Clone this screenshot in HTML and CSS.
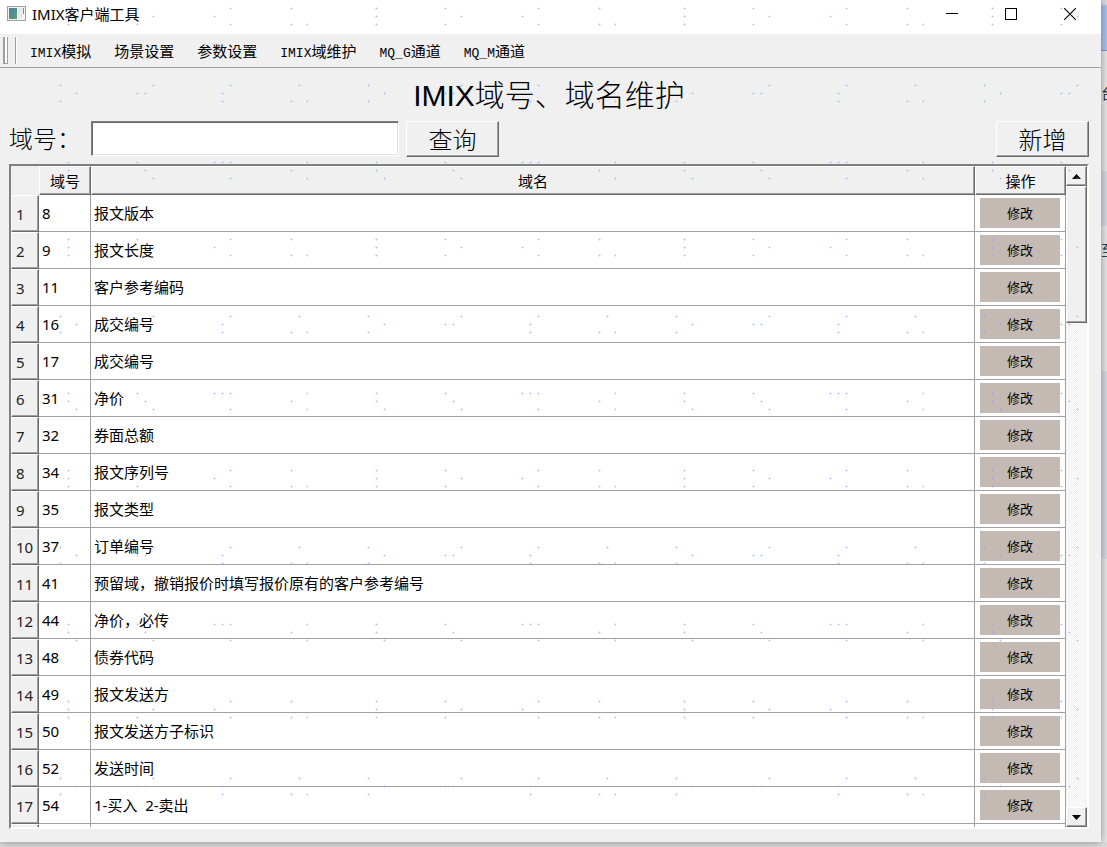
FILE: index.html
```html
<!DOCTYPE html>
<html lang="zh-CN">
<head>
<meta charset="utf-8">
<title>IMIX客户端工具</title>
<link rel="stylesheet" href="styles.css">
</head>
<body>
<div class="desktop">
  <main class="window">
    <header class="titlebar">
      <svg class="app-icon" width="19" height="16" viewBox="0 0 19 16" aria-hidden="true">
        <defs><linearGradient id="ig" x1="0" y1="0" x2="1" y2="1"><stop offset="0" stop-color="#4b7f9e"/><stop offset="1" stop-color="#58a07c"/></linearGradient></defs>
        <rect x=".5" y=".5" width="18" height="14" fill="#f4f4f4" stroke="#9a9fa5"/>
        <rect x="2" y="2" width="8" height="11" fill="url(#ig)"/>
        <rect x="11" y="2" width="4" height="11" fill="#e6e8ea"/>
        <rect x="16" y="2" width="1" height="6" fill="#5a93a6"/>
      </svg>
      <span class="app-name">IMIX客户端工具</span>
      <button class="win-btn" aria-label="最小化"><svg width="12" height="12" viewBox="0 0 12 12"><path d="M0 5.500H12" stroke="#000"/></svg></button>
      <button class="win-btn" aria-label="最大化"><svg width="12" height="12" viewBox="0 0 12 12"><rect x=".5" y=".5" width="11" height="11" fill="none" stroke="#000"/></svg></button>
      <button class="win-btn" aria-label="关闭"><svg width="12" height="12" viewBox="0 0 12 12"><path d="M0 0L12 12M12 0L0 12" stroke="#000" stroke-width="1.100"/></svg></button>
    </header>
    <nav class="toolbar">
      <i class="grip"></i><i class="groove"></i>
      <button><span>IMIX</span>模拟</button>
      <button>场景设置</button>
      <button>参数设置</button>
      <button><span>IMIX</span>域维护</button>
      <button><span>MQ_G</span>通道</button>
      <button><span>MQ_M</span>通道</button>
    </nav>
    <section class="content">
      <h1>IMIX域号、域名维护</h1>
      <form class="search" onsubmit="return false">
        <label for="field-no">域号：</label>
        <input id="field-no" type="text">
        <button class="raised">查询</button>
        <button class="raised add" type="button">新增</button>
      </form>
      <div class="frame">
        <div class="viewport">
          <table>
            <colgroup><col class="c-no"><col class="c-id"><col><col class="c-op"></colgroup>
            <thead><tr><td></td><th>域号</th><th>域名</th><th>操作</th></tr></thead>
            <tbody>
              <tr><th>1</th><td>8</td><td>报文版本</td><td><button>修改</button></td></tr>
              <tr><th>2</th><td>9</td><td>报文长度</td><td><button>修改</button></td></tr>
              <tr><th>3</th><td>11</td><td>客户参考编码</td><td><button>修改</button></td></tr>
              <tr><th>4</th><td>16</td><td>成交编号</td><td><button>修改</button></td></tr>
              <tr><th>5</th><td>17</td><td>成交编号</td><td><button>修改</button></td></tr>
              <tr><th>6</th><td>31</td><td>净价</td><td><button>修改</button></td></tr>
              <tr><th>7</th><td>32</td><td>券面总额</td><td><button>修改</button></td></tr>
              <tr><th>8</th><td>34</td><td>报文序列号</td><td><button>修改</button></td></tr>
              <tr><th>9</th><td>35</td><td>报文类型</td><td><button>修改</button></td></tr>
              <tr><th>10</th><td>37</td><td>订单编号</td><td><button>修改</button></td></tr>
              <tr><th>11</th><td>41</td><td>预留域，撤销报价时填写报价原有的客户参考编号</td><td><button>修改</button></td></tr>
              <tr><th>12</th><td>44</td><td>净价，必传</td><td><button>修改</button></td></tr>
              <tr><th>13</th><td>48</td><td>债券代码</td><td><button>修改</button></td></tr>
              <tr><th>14</th><td>49</td><td>报文发送方</td><td><button>修改</button></td></tr>
              <tr><th>15</th><td>50</td><td>报文发送方子标识</td><td><button>修改</button></td></tr>
              <tr><th>16</th><td>52</td><td>发送时间</td><td><button>修改</button></td></tr>
              <tr><th>17</th><td>54</td><td>1-买入&nbsp; 2-卖出</td><td><button>修改</button></td></tr>
              <tr><th></th><td></td><td></td><td><button aria-label="修改"></button></td></tr>
            </tbody>
          </table>
        </div>
        <div class="scrollbar">
          <button class="raised" aria-label="向上滚动"><svg width="9" height="5" viewBox="0 0 9 5"><path d="M4.500 0L9 5H0Z"/></svg></button>
          <div class="thumb raised"></div>
          <div class="track"></div>
          <button class="raised" aria-label="向下滚动"><svg width="9" height="5" viewBox="0 0 9 5"><path d="M0 0H9L4.500 5Z"/></svg></button>
        </div>
      </div>
    </section>
    <svg class="dots" aria-hidden="true">
      <defs>
        <g id="d"><path d="M-1 0H2V1H-1ZM0 -1H1V2H0Z" fill="#8aa4ff" opacity=".3"/><path d="M0 0H1V1H0Z" fill="#7f98f5" opacity=".4"/></g>
        <pattern id="dotcode" width="308" height="231" patternUnits="userSpaceOnUse">
          <use href="#d" x="68" y="8"/><use href="#d" x="68" y="16"/><use href="#d" x="68" y="24"/>
          <use href="#d" x="137" y="8"/><use href="#d" x="137" y="24"/><use href="#d" x="153" y="16"/>
          <use href="#d" x="214" y="16"/><use href="#d" x="230" y="8"/><use href="#d" x="230" y="24"/>
          <use href="#d" x="291" y="8"/><use href="#d" x="291" y="24"/><use href="#d" x="307" y="24"/>
          <use href="#d" x="60" y="85"/><use href="#d" x="60" y="101"/><use href="#d" x="76" y="93"/>
          <use href="#d" x="137" y="93"/><use href="#d" x="145" y="93"/><use href="#d" x="153" y="85"/>
          <use href="#d" x="222" y="93"/><use href="#d" x="222" y="101"/><use href="#d" x="230" y="85"/>
          <use href="#d" x="291" y="101"/><use href="#d" x="299" y="85"/><use href="#d" x="307" y="101"/>
          <use href="#d" x="68" y="162"/><use href="#d" x="68" y="170"/><use href="#d" x="76" y="178"/>
          <use href="#d" x="137" y="162"/><use href="#d" x="145" y="170"/><use href="#d" x="153" y="178"/>
          <use href="#d" x="214" y="162"/><use href="#d" x="222" y="162"/><use href="#d" x="230" y="162"/><use href="#d" x="230" y="178"/>
          <use href="#d" x="291" y="170"/><use href="#d" x="307" y="162"/><use href="#d" x="307" y="178"/>
        </pattern>
      </defs>
      <rect width="100%" height="100%" fill="url(#dotcode)"/>
    </svg>
  </main>
  <aside class="behind"><i class="b-top"></i><i class="b-blue"></i><span class="b-one">台</span><i class="b-grey"></i><span class="b-two">至</span><i class="b-low"></i></aside>
</div>
</body>
</html>
```

FILE: styles.css
```css
* { box-sizing: border-box; }

body {
  margin: 0;
  font: 15px/20px "Noto Sans", "Noto Sans CJK SC", sans-serif;
  color: #000;
}

button, input {
  font: inherit;
  color: inherit;
  padding: 0;
  margin: 0;
  border: 0;
  border-radius: 0;
  background: none;
}

.desktop {
  display: grid;
  grid-template-columns: minmax(0, 1fr) 6px;
  height: 100vh;
  padding-bottom: 5px;
  background: #dcdcdc;
  overflow: hidden;
}

.window {
  position: relative;
  z-index: 1;
  display: flex;
  flex-direction: column;
  min-height: 0;
  background: #f0f0f0;
  box-shadow: 0 0 8px rgba(0, 0, 0, 0.4);
}

.titlebar {
  display: flex;
  align-items: center;
  height: 34px;
  padding: 0 2px 6px 7px;
  background: #fff;
}

.app-name {
  flex: 1;
  margin-left: 6px;
}

.win-btn {
  display: flex;
  align-items: center;
  justify-content: center;
  width: 59px;
  height: 28px;
}

.toolbar {
  display: flex;
  align-items: center;
  height: 34px;
  padding-left: 3px;
  border-bottom: 1px solid #a0a0a0;
  font: 15px/20px "Noto Sans CJK SC", sans-serif;
}

.toolbar button {
  height: 20px;
  margin-right: 23px;
}

.toolbar span {
  font: 13px/13px "Liberation Mono", monospace;
}

.grip {
  width: 5px;
  height: 27px;
  border: 1px solid #a0a0a0;
  border-width: 0 1px 1px 2px;
  background: #fff;
}

.groove {
  width: 2px;
  height: 27px;
  margin: 0 13px 0 7px;
  border-left: 1px solid #a0a0a0;
  background: #fff;
}

.content {
  display: flex;
  flex: 1;
  flex-direction: column;
  min-height: 0;
  padding: 10px 12px 13px 9px;
}

h1 {
  margin: 0;
  font: 300 30px/36px "Liberation Sans", "Noto Sans CJK SC", sans-serif;
  text-align: center;
}

.search {
  display: flex;
  align-items: flex-start;
  height: 36px;
  margin: 7px 0;
  font: 300 24px/34px "Noto Sans CJK SC", sans-serif;
}

.search label { width: 82px; }

.search input {
  width: 308px;
  height: 35px;
  border: 1px solid;
  border-color: #808080 #fff #fff #808080;
  box-shadow: inset 1px 1px #696969, inset -1px -1px #e3e3e3;
  background: #fff;
}

.raised {
  border: 1px solid;
  border-color: #fff #696969 #696969 #fff;
  box-shadow: inset -1px -1px #a0a0a0;
  background: #f0f0f0;
}

.search .raised {
  width: 93px;
  height: 36px;
  margin-left: 7px;
}

.search .add { margin-left: auto; }

.frame {
  display: flex;
  flex: 1;
  min-height: 0;
  border: 2px solid;
  border-color: #808080 #fff #fff #808080;
  background: #fff;
}

.viewport {
  flex: 1;
  min-width: 0;
  overflow: hidden;
}

table {
  width: 100%;
  table-layout: fixed;
  border-collapse: separate;
  border-spacing: 0;
}

.c-no { width: 28px; }
.c-id { width: 52px; }
.c-op { width: 91px; }

th {
  padding: 0;
  font-weight: 400;
}

thead th {
  height: 29px;
  border: 1px solid;
  border-color: #fff #696969 #696969 #fff;
  box-shadow: inset -1px -1px #a0a0a0;
  background: #f0f0f0;
}

thead td { background: #f0f0f0; }

tbody th {
  padding: 0 0 0 4px;
  border: 1px solid;
  border-color: #fff #696969 #696969 #fff;
  box-shadow: inset -1px -1px #a0a0a0;
  background: #f0f0f0;
  color: #222;
  text-align: left;
}

tbody td {
  height: 37px;
  padding: 0 3px;
  border: 1px solid #a0a0a0;
  border-width: 0 1px 1px 0;
}

tbody td:last-child { padding: 0 5px; }

tbody button {
  display: block;
  width: 100%;
  height: 30px;
  background: #c4bab3;
  font: 13px/20px "Noto Sans CJK SC", sans-serif;
}

.scrollbar {
  display: flex;
  flex-direction: column;
  width: 21px;
  background: repeating-conic-gradient(#f0f0f0 0 25%, #fff 0 50%) 0 0 / 2px 2px;
}

.scrollbar button {
  display: flex;
  align-items: center;
  justify-content: center;
  height: 20px;
}

.thumb { flex: 135; }
.track { flex: 486; }

.dots {
  position: absolute;
  inset: 0;
  width: 100%;
  height: 100%;
  pointer-events: none;
}

.behind {
  display: flex;
  flex-direction: column;
  background: #e6e6e6;
  overflow: hidden;
  color: #333;
}

.b-top { height: 5px; background: #d8dae0; }
.b-blue { height: 46px; background: #adc1e8; border-bottom: 1px solid #8093c0; }
.b-one { height: 120px; padding-top: 32px; }
.b-grey { height: 55px; background: #d6d8e0; }
.b-two { height: 145px; padding-top: 14px; color: #245; }
.b-low { height: 188px; background: #d6d8e0; }
```
